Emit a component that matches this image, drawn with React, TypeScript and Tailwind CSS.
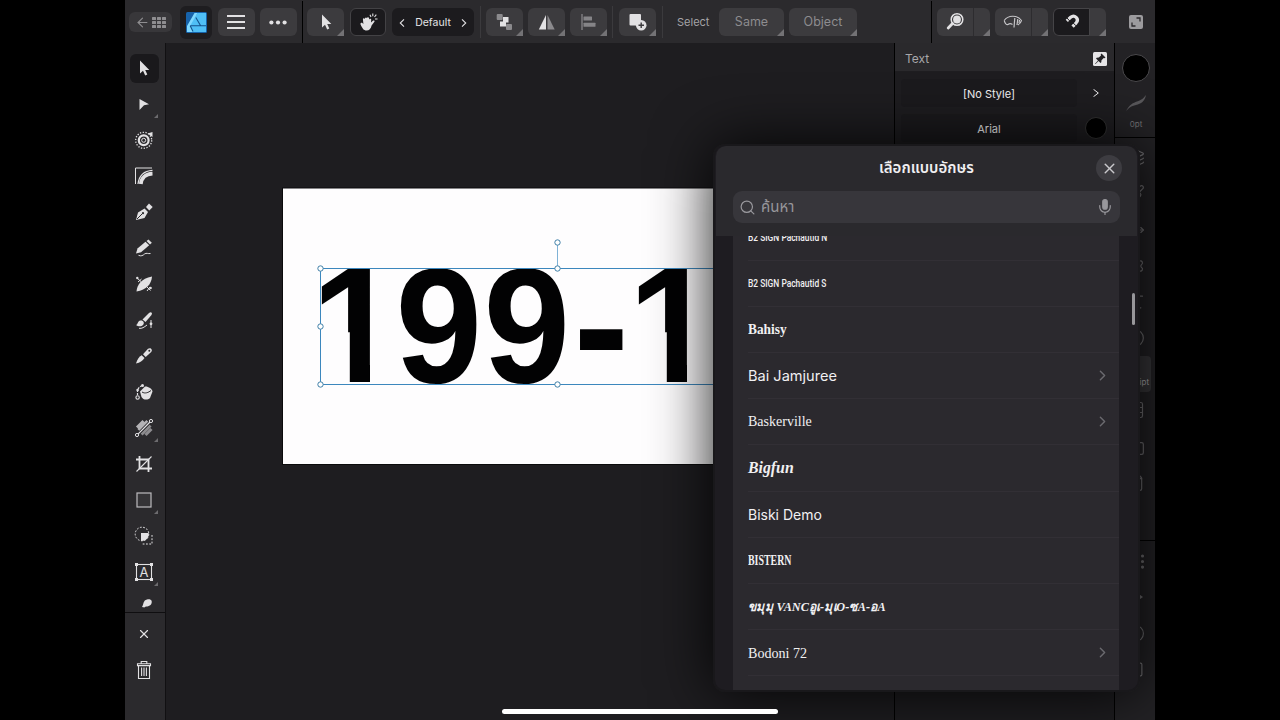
import React from "react";
import { clsx } from "clsx";
import {
    AlignCenter,
    ArrowLeft,
    ChevronRight,
    Circle,
    Copy,
    EllipsisVertical,
    File,
    Layers,
    Mic,
    Move,
    Paintbrush,
    Search,
    Settings,
    Square,
    Grid3x3,
    X,
} from "lucide-react";

interface BoxProps {
    children?: React.ReactNode;
    className?: string;
}

function Icon({ children, className = "size-5" }: BoxProps) {
    return (
        <svg viewBox="0 0 20 20" fill="none" stroke="none" className={clsx("shrink-0", className)}>
            {children}
        </svg>
    );
}

// Small triangle in the lower right corner of a button that holds more options
function Corner({ className = "bottom-0 right-0 size-[7px] text-[#737275]" }: { className?: string }) {
    return (
        <svg viewBox="0 0 6 6" className={clsx("absolute", className)}>
            <path d="M6 0V6H0Z" fill="currentColor" />
        </svg>
    );
}

function BarButton({ children, className = "w-[37px]" }: BoxProps) {
    return (
        <button className={clsx("relative flex h-7 shrink-0 items-center justify-center rounded-md bg-[#3c3b3e]", className)}>
            {children}
        </button>
    );
}

function SplitButton({ children, active }: BoxProps & { active?: boolean }) {
    return (
        <div className="relative ml-[5px] flex h-7 w-[53px] shrink-0 overflow-hidden rounded-md rounded-br-none bg-[#3c3b3e]">
            <div
                className={clsx(
                    "flex w-[37px] items-center justify-center",
                    active ? "rounded-l-md border border-[#454447] bg-[#1b1a1d]" : "border-r border-[#2d2c2f]",
                )}
            >
                {children}
            </div>
            <Corner />
        </div>
    );
}

const Divider = ({ className }: { className?: string }) => <div className={clsx("h-8 w-px shrink-0 bg-[#3b3a3d]", className)} />;

function TopBar() {
    return (
        <header className="flex h-[43px] shrink-0 items-center bg-[#2b2a2d] pl-1 pt-px font-['Inter',sans-serif] text-[#e2e1e3]">
            <button className="flex h-5 w-[43px] shrink-0 items-center justify-center gap-0.5 rounded-md bg-[#38373a] text-[#8f8e91]">
                <ArrowLeft size={15} strokeWidth={1.8} />
                <svg viewBox="0 0 14 11" className="h-[11px] w-3.5" fill="currentColor">
                    {[0, 4, 8].map((y) =>
                        [0, 5, 10].map((x) => <rect key={`${x}-${y}`} x={x} y={y} width="4" height="3" rx="0.5" />),
                    )}
                </svg>
            </button>
            <div className="ml-2 flex h-[33px] w-8 shrink-0 items-center justify-center rounded-md bg-[#1e1d20]">
                <svg viewBox="0 0 21 21" className="size-[21px]" fill="none">
                    <rect width="21" height="21" rx="1.5" fill="#1763ab" />
                    <path d="M11.5 1H20V20H6L2.5 14Z" fill="#4fbff6" />
                    <path d="M8.5 1H11.5L4.2 13.8L7 20H1V14Z" fill="#7fd8ff" />
                    <path d="M9.8 5.5L14.5 13.5M4.2 13.8H20M4.2 13.8L7 19.5" stroke="#15528c" strokeWidth="1.1" />
                </svg>
            </div>
            <BarButton className="ml-1.5 w-[37px]">
                <svg viewBox="0 0 18 14" className="mr-px h-3.5 w-[18px]" stroke="currentColor" strokeWidth="2">
                    <path d="M0 1H18M0 7H18M0 13H18" />
                </svg>
            </BarButton>
            <BarButton className="ml-[5px] w-[37px]">
                <svg viewBox="0 0 18 5" className="mr-px h-[5px] w-[18px]" fill="currentColor">
                    <circle cx="2.4" cy="2.5" r="2.1" />
                    <circle cx="9" cy="2.5" r="2.1" />
                    <circle cx="15.6" cy="2.5" r="2.1" />
                </svg>
            </BarButton>
            <div className="ml-[5px] h-[43px] w-px shrink-0 bg-black" />
            <BarButton className="ml-1 w-[37px] rounded-br-none">
                <Icon><path d="M6 2.5V15.5L9 12.8L11.2 17.5L13.3 16.5L11.2 12H15.3Z" fill="currentColor" /></Icon>
                <Corner />
            </BarButton>
            <button className="ml-1.5 flex h-7 w-9 shrink-0 items-center justify-center rounded-md border border-[#434245] bg-[#1b1a1d]">
                <Icon>
                    <path d="M3.2 10.8C4 10.3 4.6 11 5.4 12L4.9 7.2C4.9 6.1 6.4 6 6.6 7.1L7.1 6.1C7.5 5.1 8.8 5.3 8.9 6.3L9.3 5.6C9.8 4.9 10.9 5.2 11 6.1L11.3 7.6C11.7 6.4 13.2 6.7 13.2 7.8L13 10.5L15.2 8.6C16 8 17 8.9 16.4 9.7L13.6 13.6C12.8 16.8 11.2 18.6 8.6 18.6C5.6 18.6 4.4 16.5 2.6 12.6C2.2 11.7 2.6 11.1 3.2 10.8Z" fill="currentColor" />
                    <path d="M13 5L12 2.8M14.8 4.3V1.5M16.5 5L18.3 2.7M17 7H19.5" stroke="currentColor" strokeWidth="1.1" />
                </Icon>
            </button>
            <div className="ml-1.5 flex h-7 w-[82px] shrink-0 items-center justify-between rounded-md bg-[#1c1b1e] px-[7px] pt-px text-[10.5px] text-[#e6e5e7]">
                <svg viewBox="0 0 6 10" className="h-2 w-1.5" fill="none" stroke="currentColor" strokeWidth="1.3"><path d="M5.5 0.5L0.8 5L5.5 9.5" /></svg>
                Default
                <svg viewBox="0 0 6 10" className="h-2 w-1.5" fill="none" stroke="currentColor" strokeWidth="1.3"><path d="M0.5 0.5L5.2 5L0.5 9.5" /></svg>
            </div>
            <Divider className="ml-1.5" />
            <BarButton className="ml-[5px] w-[37px] rounded-br-none">
                <Icon>
                    <rect x="1.7" y="2" width="6" height="6" rx="1" fill="#8b8a8d" />
                    <path d="M8 5H13.5V10.5H11V14.5H5V9.5H8Z" fill="currentColor" />
                    <rect x="11" y="12" width="6" height="6" rx="1" fill="#8b8a8d" />
                </Icon>
                <Corner />
            </BarButton>
            <BarButton className="ml-[5px] w-[37px] rounded-br-none">
                <Icon>
                    <path d="M9 3V17.5H1.8Z" fill="currentColor" />
                    <path d="M10.5 3V17.5H17.7Z" fill="#8b8a8d" />
                </Icon>
                <Corner />
            </BarButton>
            <BarButton className="ml-[5px] w-[37px] rounded-br-none">
                <Icon>
                    <path d="M3 2V18" stroke="#9c9b9e" strokeWidth="1" />
                    <rect x="4.5" y="4.5" width="8.5" height="4" rx="0.5" fill="#858487" />
                    <rect x="4.5" y="10.8" width="12" height="4" rx="0.5" fill="#858487" />
                </Icon>
                <Corner />
            </BarButton>
            <Divider className="ml-[5px]" />
            <BarButton className="ml-1.5 w-[37px] rounded-br-none">
                <Icon>
                    <rect x="1.5" y="2" width="11.5" height="11.5" rx="1" fill="currentColor" />
                    <circle cx="13.2" cy="13.2" r="5.3" fill="currentColor" />
                    <path d="M13.2 10.5V16M10.5 13.2H16" stroke="#3c3b3e" strokeWidth="1.4" />
                </Icon>
                <Corner />
            </BarButton>
            <Divider className="ml-1.5" />
            <span className="ml-[14px] w-[42px] shrink-0 text-[11px] text-[#a5a4a7]">Select</span>
            <BarButton className="w-[65px] rounded-br-none pt-px text-[12.5px] text-[#8d8c8f]">Same<Corner /></BarButton>
            <BarButton className="ml-[5px] w-[68px] rounded-br-none pt-px text-[12.5px] text-[#8d8c8f]">Object<Corner /></BarButton>
            <div className="ml-auto h-[43px] w-px shrink-0 bg-black" />
            <SplitButton>
                <Icon>
                    <circle cx="12" cy="7.5" r="5.8" stroke="currentColor" strokeWidth="1.5" />
                    <circle cx="12" cy="7.5" r="3.9" fill="currentColor" />
                    <path d="M7.5 11.5L3.2 16" stroke="currentColor" strokeWidth="2.8" strokeLinecap="round" />
                </Icon>
            </SplitButton>
            <SplitButton>
                <Icon>
                    <path d="M1.2 8.5C5 3 14 2.5 18.5 8.5C18 10.5 16.5 12 14.8 13M1.2 8.5C2 11.5 3.5 13 5 12.5C6.5 11.3 8 11.5 9.5 12.5" stroke="#c5c4c7" strokeWidth="1.1" />
                    <path d="M11 15.5L11.8 6M14 13L14.8 7M16 11L16.5 8" stroke="#c5c4c7" strokeWidth="1.2" />
                </Icon>
            </SplitButton>
            <SplitButton active>
                <Icon>
                    <path d="M4.8 8.9L8.6 5.3C12.6 2 17.6 7 14.2 10.8L10.6 14.6" stroke="currentColor" strokeWidth="3.2" />
                    <path d="M5 6L8 9.3M11 10.8L14 13.8" stroke="#1b1a1d" strokeWidth="1" />
                </Icon>
            </SplitButton>
            <svg viewBox="0 0 14 14" className="ml-[23px] mr-3 size-3.5 shrink-0">
                <rect width="14" height="14" rx="2" fill="#9c9b9e" />
                <path d="M7.5 3H11V6.5M6.5 11H3V7.5" stroke="#2b2a2d" strokeWidth="1.3" fill="none" />
            </svg>
        </header>
    );
}

const tools: { icon: React.ReactNode; more?: boolean; active?: boolean }[] = [
    { active: true, icon: <path d="M6 2.5V15.5L9 12.8L11.2 17.5L13.3 16.5L11.2 12H15.3Z" fill="currentColor" /> },
    { more: true, icon: <path d="M5.5 5L15 10.2L10 11.3L5.5 16Z" fill="currentColor" /> },
    {
        icon: (
            <>
                <circle cx="9.7" cy="10.3" r="8" stroke="currentColor" strokeWidth="1.3" strokeDasharray="1.3 1.5" />
                <circle cx="9.7" cy="10.3" r="4.9" stroke="currentColor" strokeWidth="2.2" />
                <circle cx="9.7" cy="10.3" r="2" stroke="currentColor" />
                <path d="M13.5 3.5L18.5 2V7Z" fill="currentColor" />
            </>
        ),
    },
    {
        icon: (
            <>
                <path d="M1.5 18V2H18" stroke="currentColor" strokeWidth="1" />
                <path d="M4 18C5 10 9 4.8 18.5 4.3" stroke="currentColor" strokeWidth="1.2" />
                <path d="M6.8 18C7.5 12 11.5 7.8 18.5 7.6" stroke="currentColor" strokeWidth="3.8" />
            </>
        ),
    },
    {
        icon: (
            <>
                <path d="M2 18L4 10.5L10.5 6.5L14 10L10.5 16Z" fill="currentColor" />
                <path d="M3 17L8.5 11.5" stroke="#2b2a2d" />
                <circle cx="9" cy="11.2" r="1.1" fill="#2b2a2d" />
                <path d="M12 5L15 1.5L18.7 5L15.3 8.5Z" fill="currentColor" />
            </>
        ),
    },
    {
        icon: (
            <>
                <path d="M2 15.5L3.5 10.5L11.5 3.8L15.2 7.3L7 14.3Z" fill="currentColor" />
                <path d="M12.5 3L14.5 1.5L17.8 4.8L16 6.5Z" fill="currentColor" />
                <path d="M4.5 17.3C7 18.5 9 17.5 10.5 16C12.5 14.5 14 16 16.5 15.5" stroke="currentColor" />
            </>
        ),
    },
    {
        icon: (
            <>
                <path d="M2.5 17.5C3 11 7 4.5 18 2.5C17.5 10 12.5 16 2.5 17.5Z" fill="currentColor" />
                <path d="M3 4L7 7.5M4 8L7.5 5M13 13L16.5 16.5M16 13L13 17" stroke="currentColor" />
                <circle cx="3.3" cy="4" r="1.2" fill="currentColor" />
                <circle cx="16.6" cy="14" r="1.2" fill="currentColor" />
            </>
        ),
    },
    {
        icon: (
            <>
                <path d="M8.5 9.5L15 3C17 1.5 18.8 2.8 17.5 5L11.5 12Z" fill="currentColor" />
                <path d="M2 15C4 14.5 3.5 11 6.5 10.5C9.5 10.2 10.8 13 9 15C7.5 16.7 4 16.7 2 15Z" fill="currentColor" />
                <path d="M5 18.3C8 18.8 10 17.3 13 15M17 10V18" stroke="currentColor" />
                <circle cx="17" cy="13.8" r="1.4" fill="currentColor" />
            </>
        ),
    },
    {
        icon: (
            <>
                <path d="M2 17.5C3.5 13 5 11 7.7 9.3L10.5 12C8.5 15 6 16.8 2 17.5Z" fill="currentColor" />
                <path d="M9 8.3L14 2.8C16.5 1 19 3.5 17.2 6L11.7 11Z" fill="currentColor" />
                <circle cx="15.3" cy="4.8" r="1" fill="#2b2a2d" />
            </>
        ),
    },
    {
        icon: (
            <>
                <path d="M6 9.5L11 4.5C13 3.8 18.5 6.5 18.5 9.5L16 16C13.5 18.5 9 18 7.5 15Z" fill="currentColor" />
                <path d="M8 10C11 12 14.5 10.5 17 8.5" stroke="#2b2a2d" strokeWidth="1" />
                <path d="M3.5 13V9C4 6 6 4.3 8 3.7" stroke="currentColor" strokeDasharray="2 1" strokeWidth="1.2" />
                <circle cx="8.5" cy="3.5" r="1.5" fill="currentColor" />
                <circle cx="3.6" cy="8" r="1.3" fill="currentColor" />
                <circle cx="3.6" cy="15.5" r="1.7" stroke="currentColor" strokeWidth="1.1" />
            </>
        ),
    },
    {
        more: true,
        icon: (
            <>
                <path d="M3 9.5L9.5 3M4.5 12L13.5 3" stroke="#b3b2b5" strokeWidth="3" />
                <path d="M7.5 16.5L16.5 7.5M11.5 17L17.5 11" stroke="#8d8c8f" strokeWidth="3" />
                <path d="M4 16.2L16 4" stroke="#2b2a2d" strokeWidth="3" />
                <path d="M4 16.2L16 4" stroke="currentColor" strokeWidth="1.2" />
                <circle cx="3" cy="17" r="1.6" stroke="currentColor" />
                <circle cx="17" cy="3" r="1.6" stroke="currentColor" />
            </>
        ),
    },
    {
        icon: (
            <>
                <path d="M5.5 2V14.5H18M2 5.5H14.5V18" stroke="currentColor" strokeWidth="1.8" />
                <path d="M2.5 17.5L17.5 2.5" stroke="currentColor" strokeWidth="1.1" />
            </>
        ),
    },
    { more: true, icon: <rect x="3" y="3" width="14" height="14" fill="#353437" stroke="#bdbcbf" strokeWidth="1.2" /> },
    {
        icon: (
            <>
                <circle cx="8" cy="8" r="6.8" stroke="currentColor" strokeDasharray="1.8 1.5" />
                <path d="M18 9V18H8" stroke="currentColor" strokeDasharray="1.8 1.5" />
                <path d="M7 7H14.7C15.2 11.8 12 15.2 7 15Z" fill="currentColor" />
            </>
        ),
    },
    {
        more: true,
        icon: (
            <>
                <rect x="2.5" y="2.5" width="15" height="15" stroke="currentColor" strokeWidth="1.1" />
                <path d="M1 1h3v3H1zM16 1h3v3h-3zM1 16h3v3H1zM16 16h3v3h-3z" fill="currentColor" />
                <text x="10" y="14.8" textAnchor="middle" fontSize="13" fontFamily="Inter" fill="currentColor">A</text>
            </>
        ),
    },
];

function ToolBar() {
    return (
        <aside className="flex w-[41px] shrink-0 flex-col items-center border-r border-[#111012] bg-[#2b2a2d] text-[#e2e1e3]">
            <div className="flex h-[570px] w-full flex-col items-center overflow-hidden border-b border-[#0f0e10] pt-[7px]">
                {tools.map((tool, i) => (
                    <div key={i} className="relative flex h-9 w-full shrink-0 items-center justify-center pr-0.5">
                        <div className={clsx("flex size-[29px] items-center justify-center rounded-md", tool.active && "bg-[#1a191c]")}>
                            <Icon>{tool.icon}</Icon>
                        </div>
                        {tool.more && <Corner className="bottom-1 right-[7px] size-1 text-[#6c6b6e]" />}
                    </div>
                ))}
                <div className="flex h-9 shrink-0 pt-0.5">
                    <Icon><path d="M7 15C9 11.5 8 8.5 12 7.5C16 6.5 18 9 16 12.5C14 15 10 14 9.5 15.5Z" fill="currentColor" /></Icon>
                </div>
            </div>
            <div className="flex h-[41px] items-center pr-0.5"><X size={14} strokeWidth={2} /></div>
            <div className="flex h-8 items-center pr-0.5">
                <Icon>
                    <path d="M4.5 5.5V18.5H15.5V5.5M3.5 3.8H16.5V5.6H3.5ZM7.2 3.5V1.5H12.8V3.5M7.6 7.5V16M10 7.5V16M12.4 7.5V16" stroke="currentColor" strokeWidth="1.1" />
                </Icon>
            </div>
        </aside>
    );
}

const handles = [
    [320, 268], [557, 268], [557, 242], [320, 326], [320, 384], [557, 384],
];

function Canvas() {
    return (
        <main className="min-w-0 flex-1 overflow-hidden bg-[#1e1d20]">
            <svg viewBox="166 43 729 677" className="h-[677px] w-[729px]">
                <clipPath id="stem"><path d="M9 -130H59V5H38.8V-48H0V-130Z" /></clipPath>
                <rect x="282.5" y="188" width="620" height="276.5" fill="#fefdfe" stroke="#0b0b0c" />
                <g fontFamily="Liberation Sans, sans-serif" fontWeight="700" fontSize="159" fill="#020203">
                    <g transform="translate(311 382) scale(1 1.035)"><text clipPath="url(#stem)">1</text></g>
                    <g transform="translate(395.5 382) scale(0.98 1.03)"><text>9</text></g>
                    <g transform="translate(483.5 382) scale(0.98 1.03)"><text>9</text></g>
                    <g transform="translate(573.5 384.5) scale(1.05 1.1)"><text>-</text></g>
                    <g transform="translate(628 382) scale(1 1.035)"><text clipPath="url(#stem)">1</text></g>
                </g>
                <path d="M895 268.5H320.5V384.5H895" fill="none" stroke="#3c87bd" />
                <path d="M557.5 242V268" stroke="#7fb2d6" />
                {handles.map(([x, y]) => (
                    <circle key={`${x}-${y}`} cx={x + 0.5} cy={y + 0.5} r="2.7" fill="#fff" stroke="#3f7fa8" />
                ))}
            </svg>
        </main>
    );
}

function TextPanel() {
    return (
        <section className="flex w-[220px] shrink-0 flex-col border-l border-black bg-[#1e1d20] font-['Inter',sans-serif] text-[11px] text-[#f4f3f5]">
            <div className="flex h-7 items-center justify-between bg-[#2a292c] pl-2.5 pr-[7px] pt-[3px] text-xs text-[#a8a7aa]">
                Text
                <svg viewBox="0 0 14 14" className="size-3.5">
                    <rect width="14" height="14" rx="1.5" fill="#e6e5e7" />
                    <path d="M8.5 1.5L12.5 5.5L11.5 6.3L10.7 6L8.5 8.3L8.3 10.3L7.5 11L5.5 9L2.5 12L2 11.7L5 8.5L3 6.5L3.7 5.8L5.8 5.6L8 3.4L7.7 2.4Z" fill="#232225" />
                </svg>
            </div>
            <div className="mt-2 flex h-7 items-center pl-1.5">
                <div className="flex h-7 w-[176px] items-center justify-center rounded bg-[#1b1a1d] pt-0.5">[No Style]</div>
                <svg viewBox="0 0 6 8" className="ml-4 h-2 w-1.5" fill="none" stroke="currentColor"><path d="M0.5 0.3L5.3 4L0.5 7.7" /></svg>
            </div>
            <div className="mt-[7px] flex h-7 items-center pl-1.5">
                <div className="flex h-7 w-[176px] items-center justify-center rounded bg-[#1b1a1d] pt-0.5">Arial</div>
                <div className="ml-2 size-[22px] rounded-full border border-[#333] bg-black" />
            </div>
        </section>
    );
}

const studios = [Layers, Paintbrush, Move, Settings, AlignCenter, Circle, Square, Grid3x3, Copy, File];

function StudioStrip() {
    return (
        <aside className="flex w-[41px] shrink-0 flex-col items-center border-l border-black bg-[#232225] text-[#747376]">
            <div className="flex h-[95px] w-full flex-col items-center border-b border-black pl-0.5 pt-[11px]">
                <div className="size-7 rounded-full border border-[#4b4a4d] bg-black" />
                <svg viewBox="0 0 22 18" className="mt-3 h-[18px] w-[22px]">
                    <path d="M1 17C5 10 8 9 12 7.5C16 6 18 5 21 1C20 7 16 10 11 11C6 12 4 14 1 17Z" fill="#59585b" />
                </svg>
                <span className="mt-1.5 font-['Inter',sans-serif] text-[8px] leading-3">0pt</span>
            </div>
            <div className="flex h-[403px] w-full flex-col items-center border-b border-black pt-0.5">
                {studios.map((StudioIcon, i) => (
                    <div key={i} className={clsx("flex h-9 w-8 items-center justify-center", i === 6 && "rounded bg-[#38373a]")}>
                        {i === 6 ? (
                            <span className="ml-auto pr-0.5 pt-4 font-['Inter',sans-serif] text-[8px] text-[#b5b4b7]">Script</span>
                        ) : (
                            <StudioIcon size={20} strokeWidth={1.4} />
                        )}
                    </div>
                ))}
            </div>
            <div className="flex h-9 items-center pl-3.5 pt-1"><EllipsisVertical size={19} strokeWidth={2} /></div>
            <div className="flex h-9 items-center pt-1">
                <Icon><path d="M13 6.5L18 10L13 13.5Z" fill="currentColor" /></Icon>
            </div>
            <div className="flex h-9 items-center pt-1"><Circle size={19} strokeWidth={1.4} /></div>
            <div className="flex h-9 items-center pt-1"><Square size={17} strokeWidth={1.6} /></div>
        </aside>
    );
}

const fonts: { name: string; style: string; family?: boolean }[] = [
    { name: "B2 SIGN Pachautid N", style: "font-['Roboto',sans-serif] text-[11.5px] font-medium scale-x-[.73]" },
    { name: "B2 SIGN Pachautid S", style: "font-['Roboto',sans-serif] text-[11.5px] font-medium scale-x-[.73]" },
    { name: "Bahisy", style: "font-['Liberation_Serif',serif] text-[15px] font-bold scale-x-[.89]" },
    { name: "Bai Jamjuree", style: "pt-px font-['Inter',sans-serif] text-sm scale-x-[1.04]", family: true },
    { name: "Baskerville", style: "pt-px font-['Liberation_Serif',serif] text-sm", family: true },
    { name: "Bigfun", style: "font-['Liberation_Serif',serif] text-[17px] font-bold italic scale-x-[.93]" },
    { name: "Biski Demo", style: "pt-px font-['Inter',sans-serif] text-sm" },
    { name: "BISTERN", style: "font-['Liberation_Serif',serif] text-[15px] font-bold scale-x-[.66]" },
    { name: "ขมุมุ VANCอูเ-มุเO-ซA-อA", style: "font-['Liberation_Serif',serif] text-[13px] font-bold italic scale-x-[.94]" },
    { name: "Bodoni 72", style: "pt-px font-['Liberation_Serif',serif] text-[15px] scale-x-[.94]", family: true },
];

function FontPicker() {
    return (
        <div className="absolute left-[588px] top-[144px] flex h-[548px] w-[427px] flex-col overflow-hidden rounded-xl border-2 border-[#19181b] bg-[#1e1c21]">
            <div className="mx-px h-[90px] shrink-0 rounded-t-[10px] bg-[#2a292d] px-[17px]">
                <div className="relative flex h-[45px] items-center justify-center pt-0.5">
                    <h2 className="font-['Noto_Sans_Thai','Noto_Sans',sans-serif] text-[15px] font-semibold text-[#f0eff1]">เลือกแบบอักษร</h2>
                    <button className="absolute -right-0.5 top-[9px] flex size-[26px] items-center justify-center rounded-full bg-[#3d3c41] text-[#c9c8cc]">
                        <X size={17} strokeWidth={2.1} />
                    </button>
                </div>
                <div className="flex h-8 items-center rounded-[9px] bg-[#37363b] px-1.5 text-[#98979c]">
                    <Search size={17} strokeWidth={1.7} />
                    <span className="ml-[5px] flex-1 pt-0.5 font-['Noto_Sans_Thai','Noto_Sans',sans-serif] text-[15px]">ค้นหา</span>
                    <Mic size={18} strokeWidth={1.6} className="[&_rect]:fill-current" />
                </div>
            </div>
            <div className="flex min-h-0 flex-1">
                <div className="ml-[18px] mr-[13px] w-[386px] shrink-0 overflow-hidden bg-[#2b292e]">
                    <ul className="-mt-[21px]">
                        {fonts.map((font) => (
                            <li key={font.name} className="ml-[15px] flex h-[46.1px] items-center justify-between border-b border-[#322f35] pr-2 text-[#f1f0f2]">
                                <span className={clsx("origin-left whitespace-nowrap", font.style)}>{font.name}</span>
                                {font.family && <ChevronRight size={17} strokeWidth={2} className="text-[#6b6a6f]" />}
                            </li>
                        ))}
                    </ul>
                </div>
                <div className="mt-[57px] h-8 w-[3px] shrink-0 rounded-full bg-[#98979b]" />
            </div>
        </div>
    );
}

export default function App() {
    return (
        <div className="flex h-[720px] w-[1280px] justify-center overflow-hidden bg-black">
            <div className="relative flex w-[1030px] flex-col overflow-hidden bg-[#1e1d20]">
                <TopBar />
                <div className="flex min-h-0 flex-1">
                    <ToolBar />
                    <Canvas />
                    <TextPanel />
                    <StudioStrip />
                </div>
                <div className="absolute left-[588px] top-[144px] h-[548px] w-[427px] rounded-xl shadow-[0_0_60px_rgba(0,0,0,0.9)]" />
                <FontPicker />
                <div className="absolute bottom-[6.5px] left-[377px] h-[5px] w-[276px] rounded-full bg-white" />
            </div>
        </div>
    );
}
